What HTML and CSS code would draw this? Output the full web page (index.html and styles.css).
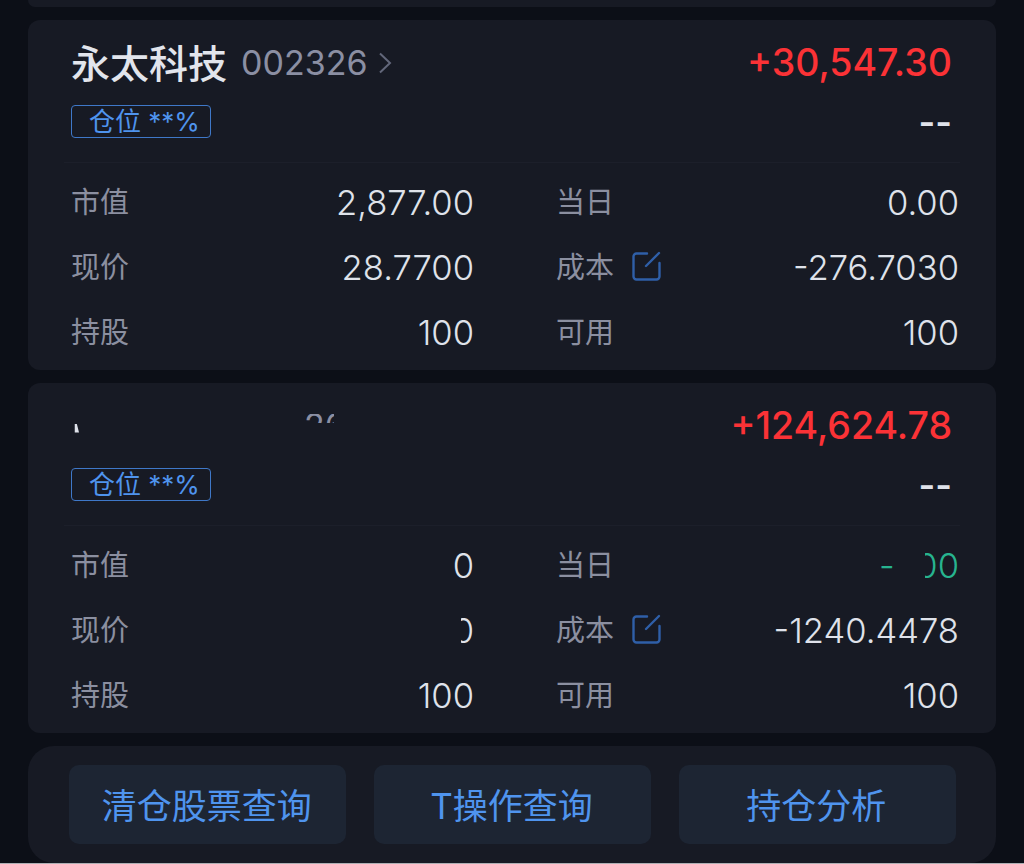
FILE: index.html
```html
<!DOCTYPE html>
<html lang="zh-CN">
<head>
<meta charset="utf-8">
<title>持仓</title>
<link rel="stylesheet" href="styles.css">
</head>
<body>
<div class="page">
  <div class="stub"></div>

  <section class="card">
    <div class="head">
      <div class="line">
        <div class="name"><span class="title">永太科技</span><span class="code">002326</span>
          <svg class="chev" width="14" height="24" viewBox="0 0 14 24"><path d="M2 2.5 12 12 2 21.5" fill="none" stroke="#62677a" stroke-width="2"/></svg>
        </div>
        <span class="profit">+30,547.30</span>
      </div>
      <div class="line2"><span class="tag">仓位 **%</span><span class="dash">--</span></div>
    </div>
    <div class="grid">
      <div class="cell"><span class="label">市值</span><span class="value">2,877.00</span></div>
      <div class="cell"><span class="label">当日</span><span class="value">0.00</span></div>
      <div class="cell"><span class="label">现价</span><span class="value">28.7700</span></div>
      <div class="cell"><span class="label">成本<svg class="edit" width="30" height="30" viewBox="0 0 30 30"><path d="M16 2.5H5.5a3 3 0 0 0-3 3v20a3 3 0 0 0 3 3h20a3 3 0 0 0 3-3V12" fill="none" stroke="#2f5fa8" stroke-width="2.4" stroke-linecap="round"/><path d="M15 15 28 2" fill="none" stroke="#2f5fa8" stroke-width="2.4" stroke-linecap="round"/></svg></span><span class="value">-276.7030</span></div>
      <div class="cell"><span class="label">持股</span><span class="value">100</span></div>
      <div class="cell"><span class="label">可用</span><span class="value">100</span></div>
    </div>
  </section>

  <section class="card">
    <div class="head">
      <div class="line">
        <div class="name"><span class="sliver-a"></span><span class="sliver-b">26</span></div>
        <span class="profit">+124,624.78</span>
      </div>
      <div class="line2"><span class="tag">仓位 **%</span><span class="dash">--</span></div>
    </div>
    <div class="grid">
      <div class="cell"><span class="label">市值</span><span class="value">0</span></div>
      <div class="cell"><span class="label">当日</span><span class="value down"><span class="minus">-</span><span class="cut">0</span>0</span></div>
      <div class="cell"><span class="label">现价</span><span class="value"><span class="cut">0</span></span></div>
      <div class="cell"><span class="label">成本<svg class="edit" width="30" height="30" viewBox="0 0 30 30"><path d="M16 2.5H5.5a3 3 0 0 0-3 3v20a3 3 0 0 0 3 3h20a3 3 0 0 0 3-3V12" fill="none" stroke="#2f5fa8" stroke-width="2.4" stroke-linecap="round"/><path d="M15 15 28 2" fill="none" stroke="#2f5fa8" stroke-width="2.4" stroke-linecap="round"/></svg></span><span class="value">-1240.4478</span></div>
      <div class="cell"><span class="label">持股</span><span class="value">100</span></div>
      <div class="cell"><span class="label">可用</span><span class="value">100</span></div>
    </div>
  </section>

  <nav class="actions">
    <a class="btn">清仓股票查询</a>
    <a class="btn">T操作查询</a>
    <a class="btn">持仓分析</a>
  </nav>
</div>
</body>
</html>
```
FILE: styles.css
```css
* { box-sizing: border-box; }
html, body { margin: 0; padding: 0; background: #aeb0b4; }
body {
  height: 864px;
  overflow: hidden;
  font-family: "Inter", "Noto Sans CJK SC", sans-serif;
  color: #dfe2ea;
}
.page {
  display: flex;
  flex-direction: column;
  gap: 13px;
  padding: 0 28px;
  height: 863px;
  background: #0c0f17;
}
.stub {
  height: 7px;
  background: #171a24;
  border-radius: 0 0 10px 10px;
}
.card {
  height: 350px;
  background: #171a24;
  border-radius: 12px;
}
.head {
  padding: 11px 44px 0 43px;
  height: 143px;
  position: relative;
}
.head::after {
  content: "";
  position: absolute;
  left: 36px;
  right: 36px;
  bottom: 0;
  height: 1px;
  background: #1c1f2a;
}
.line {
  display: flex;
  justify-content: space-between;
  align-items: center;
  height: 64px;
}
.name { display: flex; align-items: center; }
.title {
  padding-bottom: 4px;
  font-family: "Noto Sans CJK SC", sans-serif;
  font-size: 39px;
  font-weight: 500;
  color: #e2e5ec;
}
.code {
  margin-left: 14px;
  padding-bottom: 2px;
  font-size: 34px;
  color: #8b8fa3;
}
.chev { margin-left: 11px; }
.profit {
  padding-bottom: 2px;
  font-size: 37.5px;
  font-weight: 500;
  color: #fb3236;
}
.line2 {
  display: flex;
  justify-content: space-between;
  align-items: center;
  margin-top: 10px;
  height: 33px;
}
.tag {
  display: block;
  width: 139.5px;
  height: 33px;
  line-height: 32px;
  padding-left: 17px;
  font-size: 26px;
  color: #4f94ee;
  border: 1px solid #3f78c8;
  border-radius: 4px;
  white-space: nowrap;
}
.dash {
  font-size: 36px;
  font-weight: 600;
  color: #dfe2ea;
}
.grid {
  display: grid;
  grid-template-columns: 403px 403px;
  column-gap: 82px;
  grid-auto-rows: 65px;
  padding: 7px 0 0 43px;
}
.cell {
  display: flex;
  justify-content: space-between;
  align-items: center;
}
.label {
  display: flex;
  align-items: center;
  padding-bottom: 6px;
  font-family: "Noto Sans CJK SC", sans-serif;
  font-size: 29px;
  font-weight: 400;
  color: #8b8fa0;
}
.edit { margin: 2px 0 0 17px; }
.value {
  display: flex;
  align-items: center;
  padding-bottom: 2px;
  font-size: 34.6px;
  font-weight: 350;
  color: #dfe2ea;
}
.down { color: #27b48f; }
.minus { margin-right: 30px; }
.cut {
  display: flex;
  justify-content: flex-end;
  width: 13px;
  overflow: hidden;
}
.sliver-a {
  width: 5px;
  height: 9px;
  margin: 4px 0 0 3px;
  background: #dfe2ea;
  clip-path: polygon(15% 0, 55% 0, 100% 100%, 15% 100%);
}
.sliver-b {
  display: block;
  width: 30px;
  height: 9px;
  overflow: hidden;
  margin: -16px 0 0 225px;
  font-size: 34px;
  line-height: 24px;
  color: #8b8fa3;
}
.actions {
  display: flex;
  gap: 27.5px;
  height: 117px;
  padding: 19px 40px 0 41px;
  background: #171a24;
  border-radius: 26px;
}
.btn {
  flex: 1;
  display: flex;
  align-items: center;
  justify-content: center;
  height: 79px;
  padding: 0 2px 2px 0;
  font-size: 35px;
  color: #4f94ee;
  background: #1d2533;
  border-radius: 10px;
}
```
